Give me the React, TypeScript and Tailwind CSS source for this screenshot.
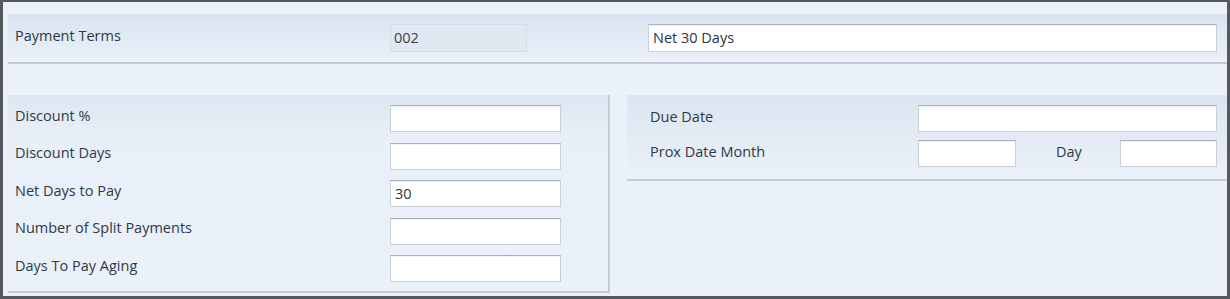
import React from 'react'

const FONT = { fontFamily: '"Open Sans", "DejaVu Sans", sans-serif' }

function Field({ value, className = '' }: { value?: string; className?: string }) {
  return (
    <div
      className={`h-[27px] bg-white border border-[#c9d0da] border-t-[#a7afba] shadow-[inset_0_1px_1px_rgba(0,0,0,0.06)] flex items-center pl-[4px] text-[14.5px] text-[#2c3440] ${className}`}
    >
      {value}
    </div>
  )
}

const LEFT_ROWS = [
  { label: 'Discount %', value: '' },
  { label: 'Discount Days', value: '' },
  { label: 'Net Days to Pay', value: '30' },
  { label: 'Number of Split Payments', value: '' },
  { label: 'Days To Pay Aging', value: '' },
]

export default function App() {
  return (
    <div
      style={FONT}
      className="w-[1230px] h-[299px] overflow-hidden bg-[#eaf1f9] border-l-[3px] border-t-2 border-r-[3px] border-b-[3px] border-[#55595f] text-[14.5px] leading-5 text-[#2f3946]"
    >
      {/* Payment terms header */}
      <div className="ml-[5px] mt-[12px] h-[50px] bg-gradient-to-b from-[#d9e3f0] to-[#ebf1f9] border-b-2 border-[#c4cad2] flex items-center">
        <div className="w-[382px] pl-[7px] -translate-y-[2px]">Payment Terms</div>
        <div className="w-[137px] h-[28px] bg-[#e2e8f1] border border-[#d6dce5] flex items-center pl-[3px] text-[#3a424d]">002</div>
        <div className="w-[121px]" />
        <Field value="Net 30 Days" className="w-[569px] h-[28px]" />
      </div>

      <div className="flex mt-[31px]">
        {/* Left group */}
        <div className="ml-[5px] w-[602px] h-[198px] bg-gradient-to-b from-[#dce5f1] via-[#e9eff8] via-[20%] to-[#ebf1f9] border-r-2 border-b-2 border-[#c7ccd3] pt-[10px] flex flex-col gap-[10.5px]">
          {LEFT_ROWS.map(r => (
            <div key={r.label} className="flex items-center h-[27px]">
              <div className="w-[382px] pl-[7px] -translate-y-[3px]">{r.label}</div>
              <Field value={r.value} className="w-[171px]" />
            </div>
          ))}
        </div>

        {/* Right group */}
        <div className="ml-[17px] flex-1 h-[86px] bg-gradient-to-b from-[#dce5f1] to-[#ebf1f9] border-b-2 border-[#c7ccd3] pt-[10px] flex flex-col gap-[8px]">
          <div className="flex items-center h-[27px]">
            <div className="w-[291px] pl-[23px] -translate-y-[2px]">Due Date</div>
            <Field className="w-[299px]" />
          </div>
          <div className="flex items-center h-[27px]">
            <div className="w-[291px] pl-[23px] -translate-y-[2px]">Prox Date Month</div>
            <Field className="w-[98px]" />
            <div className="w-[104px] pl-[40px] -translate-y-[2px]">Day</div>
            <Field className="w-[97px]" />
          </div>
        </div>
      </div>
    </div>
  )
}
